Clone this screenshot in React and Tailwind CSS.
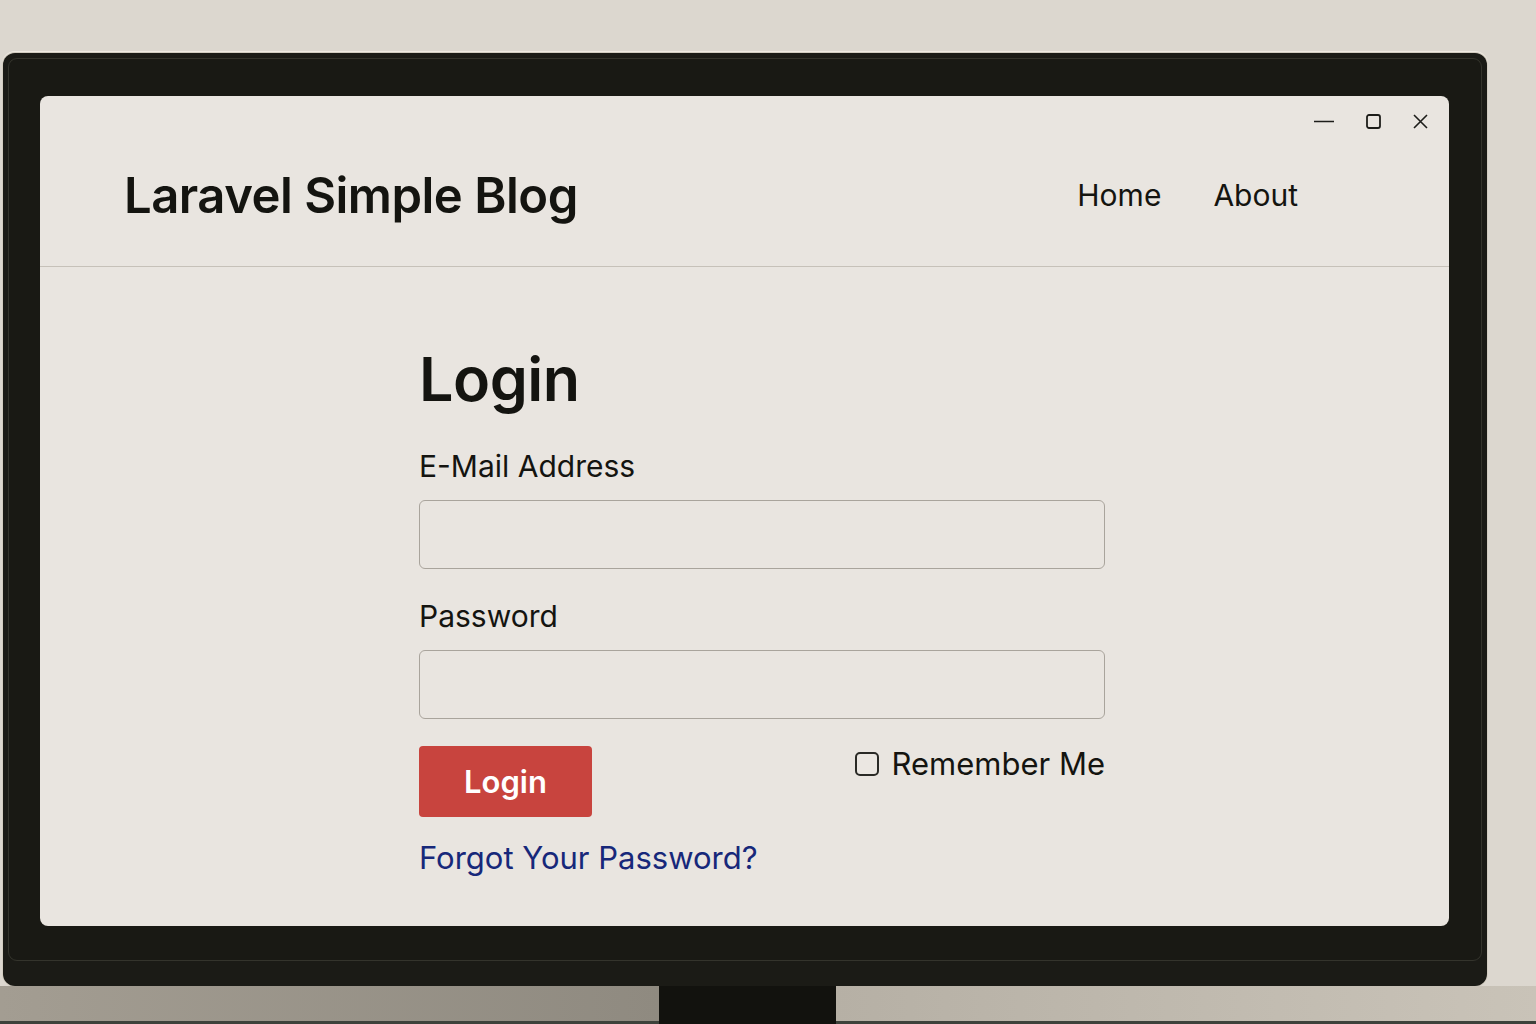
export default function App() {
  return (
    <div className="w-[1536px] h-[1024px] overflow-hidden bg-[#dcd7cf] flex flex-col font-['Inter','Noto_Sans',sans-serif] text-[#141410]">
      {/* Monitor */}
      <div className="flex-none mt-[53px] ml-[3px] w-[1484px] h-[933px] rounded-[12px] bg-[#1b1b16] p-[5px] shadow-[0_0_0_1px_#d2ccc0,0_-1px_0_1px_#efeae2]">
        <div className="w-full h-[903px] rounded-[9px] border border-[#34342c] bg-[#191914] pt-[37px] pl-[31px]">
          {/* Screen */}
          <div className="w-[1409px] h-[830px] rounded-[8px] bg-[#e9e5e0] flex flex-col overflow-hidden">
            {/* Header */}
            <div className="flex-none h-[171px] border-b border-[#c6c1b9] flex flex-col">
              <div className="h-[50px] flex items-center justify-end gap-[32px] pr-[21px]">
                <svg width="20" height="15" viewBox="0 0 20 15" fill="none">
                  <line x1="0" y1="7.5" x2="20" y2="7.5" stroke="#1d1d1a" strokeWidth="1.6" />
                </svg>
                <svg width="15" height="15" viewBox="0 0 15 15" fill="none">
                  <rect x="1" y="1" width="13" height="13" rx="2" stroke="#1d1d1a" strokeWidth="1.8" />
                </svg>
                <svg width="15" height="15" viewBox="0 0 15 15" fill="none">
                  <path d="M1 1L14 14M14 1L1 14" stroke="#1d1d1a" strokeWidth="1.6" />
                </svg>
              </div>
              <div className="h-[98px] flex items-center justify-between pl-[84px] pr-[151px]">
                <div className="text-[49px] font-semibold leading-none tracking-[-0.5px] text-[#141410]">
                  Laravel Simple Blog
                </div>
                <nav className="flex items-center gap-[52px] text-[30px] leading-none">
                  <a className="text-[#141410]">Home</a>
                  <a className="text-[#141410]">About</a>
                </nav>
              </div>
            </div>
            {/* Form */}
            <div className="pl-[379px] pt-[82px]">
              <div className="w-[686px] flex flex-col">
                <h1 className="text-[61px] font-semibold leading-none tracking-[-0.5px]">Login</h1>
                <label className="mt-[41px] text-[30px] leading-none">E-Mail Address</label>
                <div className="mt-[19px] h-[69px] w-full rounded-[6px] border border-[#a9a49c]" />
                <label className="mt-[32px] text-[30px] leading-none">Password</label>
                <div className="mt-[19px] h-[69px] w-full rounded-[6px] border border-[#a9a49c]" />
                <div className="mt-[27px] flex justify-between items-start">
                  <button className="w-[173px] h-[71px] rounded-[4px] bg-[#c8443e] text-white text-[31px] font-semibold leading-none">
                    Login
                  </button>
                  <label className="flex items-center gap-[13px] mt-[2px]">
                    <span className="w-[24px] h-[24px] rounded-[5px] border-2 border-[#2a2a26] bg-[#ebe7e2]" />
                    <span className="text-[31px] leading-none">Remember Me</span>
                  </label>
                </div>
                <a className="mt-[25px] text-[31px] leading-none text-[#17287a]">Forgot Your Password?</a>
              </div>
            </div>
          </div>
        </div>
      </div>
      {/* Stand / desk strip */}
      <div className="flex-1 flex">
        <div className="w-[659px] bg-gradient-to-r from-[#a39d92] to-[#8f8a80] border-b-[3px] border-[#3d423b]" />
        <div className="w-[177px] bg-[#12120e]" />
        <div className="flex-1 bg-gradient-to-r from-[#b6b0a5] to-[#c9c3b8] border-b-[3px] border-[#3d423b]" />
      </div>
    </div>
  );
}
